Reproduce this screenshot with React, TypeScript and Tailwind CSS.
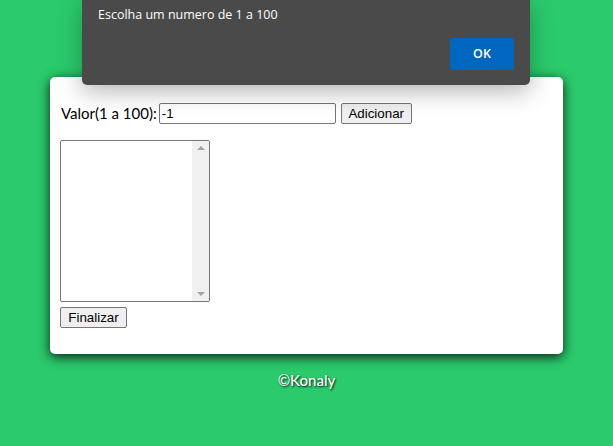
import React from "react";

export default function App() {
  return (
    <div className="relative w-[613px] h-[446px] overflow-hidden bg-[#2bca6c]">
      <div className="px-[50px] pt-[77px]">
        <div className="bg-white rounded-[5px] shadow-[0_3px_12px_rgba(0,0,0,0.85)] h-[277px] px-[10px] pt-[26px]">
          <div className="flex items-center h-[21px]">
            <span className="font-['Lato',sans-serif] text-[15px] text-black mr-[2px] ml-[1px]">Valor(1 a 100):</span>
            <input
              readOnly
              value="-1"
              className="w-[177px] h-[21px] border border-[#767676] rounded-[2px] px-[2px] text-[13.33px] font-['Liberation_Sans',Arial,sans-serif] text-black outline-none"
            />
            <button className="ml-[5px] w-[71px] h-[21px] border border-[#767676] rounded-[2px] bg-[#efefef] text-[13.33px] font-['Liberation_Sans',Arial,sans-serif] text-black leading-none">
              Adicionar
            </button>
          </div>
          <div className="mt-[16px] w-[150px] h-[162px] border border-[#767676] rounded-[2px] flex">
            <div className="flex-1" />
            <div className="w-[17px] bg-[#f0f0f0] flex flex-col justify-between items-center py-[5px]">
              <div className="w-0 h-0 border-l-[4px] border-r-[4px] border-b-[4px] border-l-transparent border-r-transparent border-b-[#a3a3a3]" />
              <div className="w-0 h-0 border-l-[4px] border-r-[4px] border-t-[4px] border-l-transparent border-r-transparent border-t-[#a3a3a3]" />
            </div>
          </div>
          <button className="mt-[5px] w-[67px] h-[21px] border border-[#767676] rounded-[2px] bg-[#efefef] text-[13.33px] font-['Liberation_Sans',Arial,sans-serif] text-black leading-none">
            Finalizar
          </button>
        </div>
        <div className="text-center mt-[15px] text-white text-[15px] font-medium font-['Lato',sans-serif] [text-shadow:1px_1px_2px_rgba(0,0,0,0.9)]">
          ©Konaly
        </div>
      </div>

      <div className="absolute left-[82px] top-0 w-[448px] h-[85px] bg-[#4a4a4a] rounded-b-[5px] shadow-[0_6px_24px_rgba(0,0,0,0.3)]">
        <div className="pl-[16px] pt-[6px] text-white text-[12.5px] font-['Open_Sans',sans-serif]">
          Escolha um numero de 1 a 100
        </div>
        <div className="absolute left-[368px] top-[38px] w-[64px] h-[32px] bg-[#0067c0] rounded-[3px] flex items-center justify-center text-white text-[12.5px] font-semibold font-['Open_Sans',sans-serif]">
          OK
        </div>
      </div>
    </div>
  );
}
